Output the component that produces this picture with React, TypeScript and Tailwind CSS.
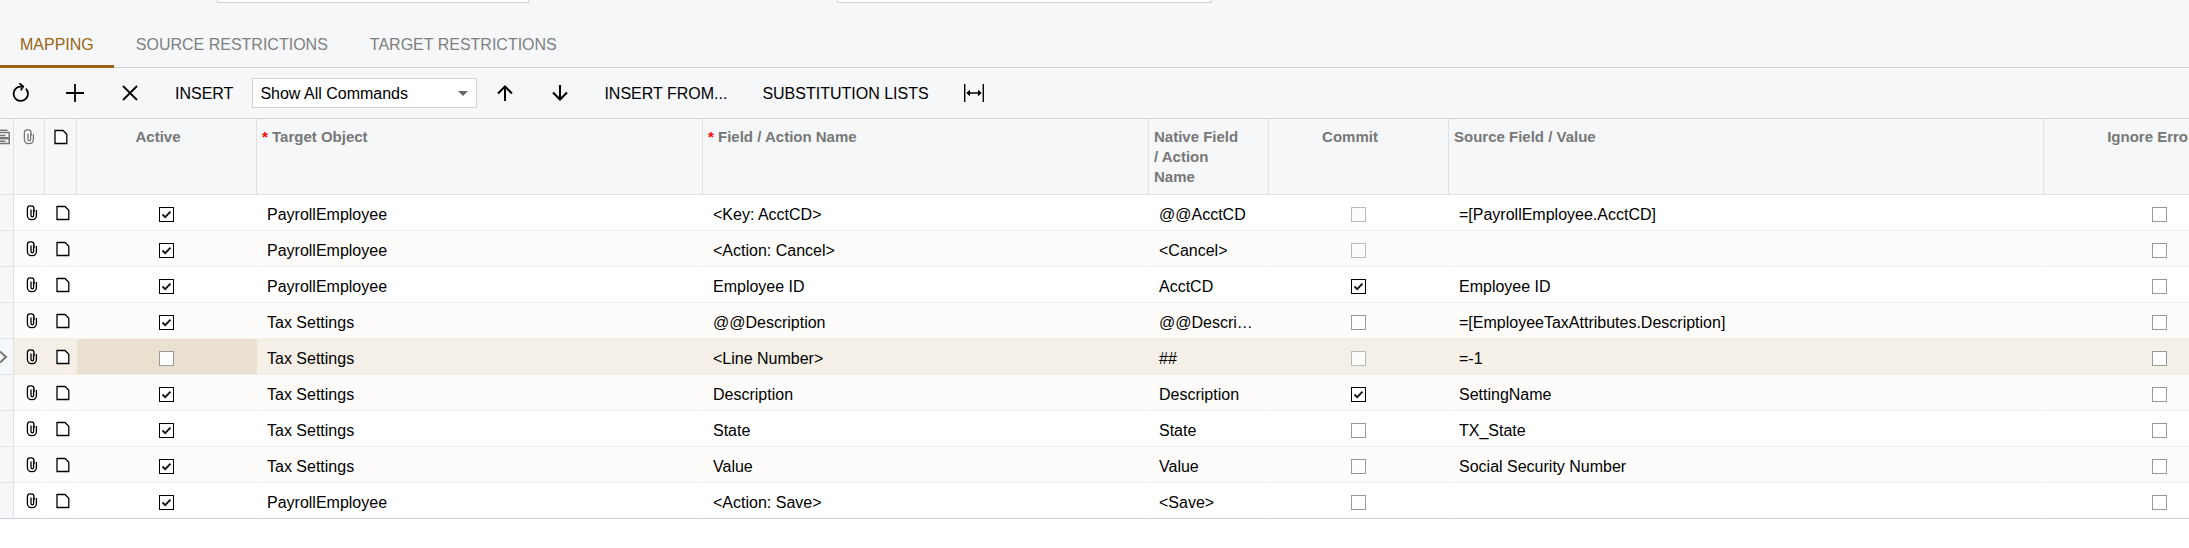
import { useState } from 'react';
import { clsx } from 'clsx';

interface MappingRow {
  active: boolean;
  target: string;
  field: string;
  native: string;
  commit: boolean;
  commitDisabled?: boolean;
  source: string;
}

const initialRows: MappingRow[] = [
  { active: true, target: 'PayrollEmployee', field: '<Key: AcctCD>', native: '@@AcctCD', commit: false, commitDisabled: true, source: '=[PayrollEmployee.AcctCD]' },
  { active: true, target: 'PayrollEmployee', field: '<Action: Cancel>', native: '<Cancel>', commit: false, commitDisabled: true, source: '' },
  { active: true, target: 'PayrollEmployee', field: 'Employee ID', native: 'AcctCD', commit: true, source: 'Employee ID' },
  { active: true, target: 'Tax Settings', field: '@@Description', native: '@@Description', commit: false, source: '=[EmployeeTaxAttributes.Description]' },
  { active: false, target: 'Tax Settings', field: '<Line Number>', native: '##', commit: false, commitDisabled: true, source: '=-1' },
  { active: true, target: 'Tax Settings', field: 'Description', native: 'Description', commit: true, source: 'SettingName' },
  { active: true, target: 'Tax Settings', field: 'State', native: 'State', commit: false, source: 'TX_State' },
  { active: true, target: 'Tax Settings', field: 'Value', native: 'Value', commit: false, source: 'Social Security Number' },
  { active: true, target: 'PayrollEmployee', field: '<Action: Save>', native: '<Save>', commit: false, source: '' },
];

const tabs = ['MAPPING', 'SOURCE RESTRICTIONS', 'TARGET RESTRICTIONS'];

function ClipIcon() {
  return (
    <svg viewBox="0 0 12 16" className="block h-4 w-3" fill="none" stroke="currentColor" strokeWidth="1.3">
      <path d="M7.6 4.5v6a1.3 1.3 0 0 1-2.6 0V4.5" />
      <path d="M8 7V3.6A2.8 2.8 0 0 0 5.2 .9h-1A2.8 2.8 0 0 0 1.4 3.6v7a4 4 0 0 0 4 4h1a4 4 0 0 0 4-4V5" />
    </svg>
  );
}

function NoteIcon() {
  return (
    <svg viewBox="0 0 14 16" className="block h-4 w-3.5" fill="#fff" stroke="currentColor" strokeWidth="1.3">
      <path d="M1 1.5h8l3.8 3.8v9.2H1z" />
    </svg>
  );
}

interface CheckBoxProps {
  label: string;
  checked: boolean;
  disabled?: boolean;
  onChange?: (checked: boolean) => void;
}

function CheckBox({ label, checked, disabled, onChange }: CheckBoxProps) {
  return (
    <span className="relative mx-auto block h-[15px] w-[15px]">
      <input
        type="checkbox"
        aria-label={label}
        checked={checked}
        disabled={disabled}
        onChange={(e) => onChange?.(e.target.checked)}
        className="block h-[15px] w-[15px] appearance-none border border-[#999] bg-white checked:border-black disabled:border-[#bbb] disabled:bg-[#fcfcfa]"
      />
      {checked && (
        <svg viewBox="0 0 15 15" className="pointer-events-none absolute inset-0" fill="none" stroke="#111" strokeWidth="1.8">
          <path d="M3.5 7.5l2.7 2.7 5.3-5.6" />
        </svg>
      )}
    </span>
  );
}

export default function App() {
  const [activeTab, setActiveTab] = useState('MAPPING');
  const [rows, setRows] = useState(initialRows);
  const [selected, setSelected] = useState(4);

  const updateRow = (index: number, patch: Partial<MappingRow>) => {
    setRows(rows.map((row, i) => (i === index ? { ...row, ...patch } : row)));
  };

  const th = 'border-r border-b border-[#dfe1e6] pt-2 text-[15px] leading-5 font-bold text-[#777] align-top';
  const textTh = 'pl-[5px] pr-6 text-left';
  const checkTh = 'pr-[17px]';
  const td = 'border-r border-b border-r-transparent truncate';

  return (
    <div className="overflow-hidden bg-white font-['Liberation_Sans',Arial,sans-serif] text-base text-black">
      <div className="bg-[#f5f7f9]">
        {/* Bottom edge of the form fields */}
        <div className="flex h-[23px] items-start">
          <input aria-label="Name" className="ml-[217px] h-[3px] w-[312px] border border-t-0 border-[#d0d3d8] bg-white" />
          <input aria-label="Provider" className="ml-[308px] h-[3px] w-[375px] border border-t-0 border-[#d0d3d8] bg-white" />
        </div>

        {/* Tabs */}
        <div role="tablist" className="flex h-[45px] gap-0.5 border-b border-[#d0d3d8]">
          {tabs.map((tab) => (
            <button
              key={tab}
              role="tab"
              aria-selected={tab === activeTab}
              onClick={() => setActiveTab(tab)}
              className={clsx(
                'h-[45px] border-b-[3px] px-5 pt-0.5 whitespace-nowrap',
                tab === activeTab ? 'border-[#9a6412] text-[#9a6412]' : 'border-transparent text-[#808080]'
              )}
            >
              {tab}
            </button>
          ))}
        </div>

        {/* Toolbar */}
        <div className="flex h-[51px] items-center border-b border-[#d0d3d8] whitespace-nowrap">
          <button aria-label="Refresh" className="ml-[11px] h-5 w-5">
            <svg viewBox="0 0 20 20" fill="none" stroke="currentColor" strokeWidth="1.8">
              <path d="M14.8 5.6A7.2 7.2 0 1 1 5.2 5.2Q7 3.4 11.8 3.4" />
              <path d="M8.4 .4l3.8 3-2.4 3.8" />
            </svg>
          </button>
          <button aria-label="Add row" className="ml-[34px] h-5 w-5">
            <svg viewBox="0 0 20 20" fill="none" stroke="currentColor" strokeWidth="1.8">
              <path d="M10 1v18M1 10h18" />
            </svg>
          </button>
          <button aria-label="Delete row" className="ml-[35px] h-5 w-5">
            <svg viewBox="0 0 20 20" fill="none" stroke="currentColor" strokeWidth="1.8">
              <path d="M3 3l14 14M17 3L3 17" />
            </svg>
          </button>
          <button className="ml-[35px] pt-px">INSERT</button>
          <div className="relative ml-[19px]">
            <select aria-label="Commands" className="block h-[30px] w-[225px] appearance-none border border-[#d0d3d8] bg-white px-[7px] pt-px">
              <option>Show All Commands</option>
            </select>
            <svg viewBox="0 0 10 5" className="pointer-events-none absolute top-[13px] right-[9px] h-[5px] w-2.5" fill="#666">
              <path d="M0 0h10L5 5z" />
            </svg>
          </div>
          <button aria-label="Move up" className="ml-[18px] h-5 w-5">
            <svg viewBox="0 0 20 20" fill="none" stroke="currentColor" strokeWidth="2">
              <path d="M10 18V3.5M3 10.5l7-7 7 7" />
            </svg>
          </button>
          <button aria-label="Move down" className="ml-[35px] h-5 w-5">
            <svg viewBox="0 0 20 20" fill="none" stroke="currentColor" strokeWidth="2">
              <path d="M10 2v14.5M3 9.5l7 7 7-7" />
            </svg>
          </button>
          <button className="ml-[34px] pt-px">INSERT FROM...</button>
          <button className="ml-[35px] pt-px">SUBSTITUTION LISTS</button>
          <button aria-label="Fit to screen" className="ml-[35px] h-5 w-5">
            <svg viewBox="0 0 20 20" stroke="currentColor" strokeWidth="1.4">
              <path fill="none" d="M.7 1v18M19.3 1v18M4 10h12" />
              <path fill="currentColor" strokeWidth="1" d="M5.5 7.5L2.8 10l2.7 2.5zM14.5 7.5l2.7 2.5-2.7 2.5z" />
            </svg>
          </button>
        </div>
      </div>

      {/* Mapping grid, runs past the right edge */}
      <div className="-mr-[86px] pb-7">
        <table className="w-full table-fixed border-separate border-spacing-0">
          <colgroup>
            <col className="w-3.5" />
            <col className="w-[31px]" />
            <col className="w-8" />
            <col className="w-[180px]" />
            <col className="w-[446px]" />
            <col className="w-[446px]" />
            <col className="w-[120px]" />
            <col className="w-[180px]" />
            <col />
            <col className="w-[231px]" />
          </colgroup>
          <thead className="bg-[#f5f7f9]">
            <tr className="h-[76px]">
              <th className={clsx(th, 'overflow-hidden')} aria-label="Row settings">
                <svg viewBox="0 0 10 16" className="mt-0.5 h-4 w-2.5" fill="none" stroke="#777" strokeWidth="1.5">
                  <path d="M0 1.2h7.5M0 3.6h9.2v11H0" />
                  <path strokeWidth="2.4" d="M0 9.2h9" />
                  <path d="M0 6.4h5.5M0 12.2h5.5" />
                </svg>
              </th>
              <th className={th} aria-label="Files">
                <div className="mt-0.5 flex justify-center"><ClipIcon /></div>
              </th>
              <th className={th} aria-label="Notes">
                <div className="mt-0.5 flex justify-center text-black"><NoteIcon /></div>
              </th>
              <th className={clsx(th, checkTh)}>Active</th>
              <th className={clsx(th, textTh)}><span className="text-[#f00]">*</span> Target Object</th>
              <th className={clsx(th, textTh)}><span className="text-[#f00]">*</span> Field / Action Name</th>
              <th className={clsx(th, textTh)}>Native Field / Action Name</th>
              <th className={clsx(th, checkTh)}>Commit</th>
              <th className={clsx(th, textTh)}>Source Field / Value</th>
              <th className={clsx(th, checkTh)}>Ignore Error</th>
            </tr>
          </thead>
          <tbody>
            {rows.map((row, i) => {
              const last = i === rows.length - 1;
              const cell = clsx(td, last ? 'border-b-[#cdced8]' : 'border-b-[#f4efe8]');
              const iconCell = clsx(cell, 'pt-px');
              const textCell = clsx(cell, 'px-2.5 pt-1');
              return (
                <tr
                  key={i}
                  onClick={() => setSelected(i)}
                  className={clsx('h-9', i === selected ? 'bg-[#f4efe7]' : i % 2 ? 'bg-[#fdfcfa]' : 'bg-white')}
                >
                  <td className={clsx('overflow-hidden border-r border-b border-r-[#dfe1e6] bg-[#f5f7f9]', last ? 'border-b-[#cdced8]' : 'border-b-[#dfe1e6]')}>
                    {i === selected && (
                      <svg viewBox="0 0 8 14" className="h-3.5 w-2" fill="none" stroke="#777" strokeWidth="2">
                        <path d="M0 1.5L6 7l-6 5.5" />
                      </svg>
                    )}
                  </td>
                  <td className={iconCell}>
                    <button aria-label="Files" className="ml-3 block"><ClipIcon /></button>
                  </td>
                  <td className={iconCell}>
                    <button aria-label="Notes" className="ml-[11px] block"><NoteIcon /></button>
                  </td>
                  <td className={clsx(textCell, i === selected && 'bg-[#e9e0cf]')}>
                    <CheckBox label="Active" checked={row.active} onChange={(active) => updateRow(i, { active })} />
                  </td>
                  <td className={textCell}>{row.target}</td>
                  <td className={textCell}>{row.field}</td>
                  <td className={textCell}>{row.native}</td>
                  <td className={textCell}>
                    <CheckBox label="Commit" checked={row.commit} disabled={row.commitDisabled} onChange={(commit) => updateRow(i, { commit })} />
                  </td>
                  <td className={textCell}>{row.source}</td>
                  <td className={textCell}>
                    <CheckBox label="Ignore Error" checked={false} />
                  </td>
                </tr>
              );
            })}
          </tbody>
        </table>
      </div>
    </div>
  );
}
